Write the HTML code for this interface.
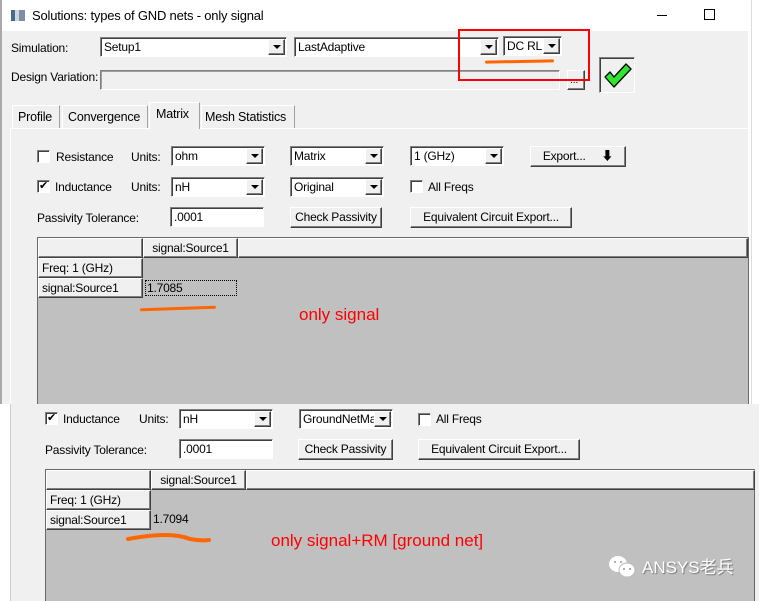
<!DOCTYPE html>
<html><head><meta charset="utf-8"><style>
*{margin:0;padding:0;box-sizing:border-box}
html,body{width:759px;height:601px;overflow:hidden}
body{position:relative;background:#fff;font-family:"Liberation Sans","Noto Sans CJK SC",sans-serif;font-size:12px;letter-spacing:-0.2px;color:#000}
.a{position:absolute}
.t{position:absolute;white-space:nowrap;line-height:14px}
.cb{position:absolute;height:20px;background:#fff;border:1px solid;border-color:#808080 #fff #fff #808080;box-shadow:inset 1px 1px 0 #404040;overflow:hidden}
.cb span{position:absolute;left:3px;top:2px;white-space:nowrap}
.cb i{position:absolute;right:1px;top:1px;width:17px;height:16px;background:#f0f0f0;border:1px solid;border-color:#fff #404040 #404040 #fff;box-shadow:inset -1px -1px 0 #808080}
.cb i:after{content:"";position:absolute;left:4px;top:5px;border-left:4px solid transparent;border-right:4px solid transparent;border-top:4px solid #000}
.btn{position:absolute;height:21px;background:#f0f0f0;border:1px solid;border-color:#fff #404040 #404040 #fff;box-shadow:inset -1px -1px 0 #808080;text-align:center;line-height:18px;white-space:nowrap}
.ck{position:absolute;width:13px;height:13px;background:#fff;border:1px solid;border-color:#808080 #fff #fff #808080;box-shadow:inset 1px 1px 0 #404040;font-size:11px;line-height:11px;text-align:center}
.hc{position:absolute;background:#f0f0f0;border:1px solid;border-color:#fff #404040 #404040 #fff;box-shadow:inset -1px -1px 0 #808080;white-space:nowrap;line-height:18px;padding-left:3px}
.grid{position:absolute;background:#c0c0c0;border:1px solid #696969}
.red{position:absolute;color:#f00;font-size:17px;letter-spacing:0;white-space:nowrap}
</style></head><body>
<div class="a" style="left:748px;top:0;width:11px;height:601px;background:#fff"></div>
<div class="a" style="left:751px;top:0;width:1px;height:404px;background:#ddd"></div>
<div class="a" style="left:0;top:0;width:748px;height:404px;background:#f0f0f0;border-left:2px solid #aaa"></div>
<div class="a" style="left:2px;top:0;width:746px;height:31px;background:#fff"></div>
<div class="a" style="left:11px;top:10px;width:14px;height:11px;background:linear-gradient(90deg,#4a6a8a 0 4px,#cfd6de 4px 8px,#7b8ea3 8px)"></div>
<div class="t" style="left:32px;top:9px;font-size:13px">Solutions: types of GND nets - only signal</div>
<div class="a" style="left:657px;top:15px;width:10px;height:1px;background:#000"></div>
<div class="a" style="left:704px;top:9px;width:11px;height:11px;border:1px solid #000"></div>

<div class="t" style="left:11px;top:41px">Simulation:</div>
<div class="cb" style="left:100px;top:37px;width:187px"><span>Setup1</span><i></i></div>
<div class="cb" style="left:294px;top:37px;width:205px"><span>LastAdaptive</span><i></i></div>
<div class="cb" style="left:503px;top:36px;width:59px;font-size:12px"><span>DC RL</span><i></i></div>
<div class="t" style="left:11px;top:70px">Design Variation:</div>
<div class="a" style="left:100px;top:70px;width:460px;height:20px;background:#f0f0f0;border:1px solid;border-color:#808080 #fff #fff #808080;box-shadow:inset 1px 1px 0 #a0a0a0"></div>
<div class="btn" style="left:567px;top:70px;width:18px;height:20px"></div>
<div class="t" style="left:570px;top:74px;font-size:10px;letter-spacing:0">...</div>
<div class="a" style="left:458px;top:29px;width:132px;height:52px;border:2px solid #f00"></div>
<div class="a" style="left:485px;top:60px;width:69px;height:3px;background:#f60;border-radius:2px;transform:rotate(-1deg)"></div>
<div class="a" style="left:599px;top:57px;width:36px;height:36px;background:#f0f0f0;border:1px solid;border-color:#808080 #fff #fff #808080;box-shadow:inset 1px 1px 0 #404040"></div>
<svg class="a" style="left:602px;top:60px" width="30" height="30" viewBox="0 0 30 30"><path d="M3 17 L8 12 L12 17 L24 4 L29 9 L12 27 Z" fill="#2ee62e" stroke="#000" stroke-width="1.3" stroke-linejoin="round"/></svg>

<div class="a" style="left:10px;top:128px;width:738px;height:276px;border-top:1px solid #fff;border-left:1px solid #fff;background:#f0f0f0"></div>
<div class="a" style="left:12px;top:105px;width:48px;height:23px;border:1px solid #fff;border-right-color:#a0a0a0;border-bottom:none;font-size:12.5px;padding:4px 0 0 5px">Profile</div>
<div class="a" style="left:62px;top:105px;width:86px;height:23px;border:1px solid #fff;border-right-color:#a0a0a0;border-bottom:none;font-size:12.5px;padding:4px 0 0 5px">Convergence</div>
<div class="a" style="left:149px;top:102px;width:51px;height:27px;border:1px solid #fff;border-right-color:#a0a0a0;border-bottom:none;background:#f0f0f0;font-size:12.5px;padding:4px 0 0 6px">Matrix</div>
<div class="a" style="left:201px;top:105px;width:94px;height:23px;border:1px solid #fff;border-right-color:#a0a0a0;border-bottom:none;font-size:12.5px;padding:4px 0 0 3px">Mesh Statistics</div>

<div class="ck" style="left:37px;top:150px"></div>
<div class="t" style="left:56px;top:150px">Resistance</div>
<div class="t" style="left:131px;top:150px">Units:</div>
<div class="cb" style="left:171px;top:146px;width:94px"><span>ohm</span><i></i></div>
<div class="cb" style="left:290px;top:146px;width:94px"><span>Matrix</span><i></i></div>
<div class="cb" style="left:410px;top:146px;width:94px"><span>1 (GHz)</span><i></i></div>
<div class="btn" style="left:530px;top:146px;width:96px">Export... &nbsp;&nbsp;&nbsp;&nbsp;<b>&#x2B07;</b></div>

<div class="ck" style="left:37px;top:180px">✔</div>
<div class="t" style="left:55px;top:180px">Inductance</div>
<div class="t" style="left:131px;top:180px">Units:</div>
<div class="cb" style="left:171px;top:177px;width:94px"><span>nH</span><i></i></div>
<div class="cb" style="left:290px;top:177px;width:94px"><span>Original</span><i></i></div>
<div class="ck" style="left:410px;top:180px"></div>
<div class="t" style="left:428px;top:180px">All Freqs</div>

<div class="t" style="left:37px;top:211px">Passivity Tolerance:</div>
<div class="cb" style="left:170px;top:207px;width:94px"><span>.0001</span></div>
<div class="btn" style="left:290px;top:207px;width:92px">Check Passivity</div>
<div class="btn" style="left:410px;top:207px;width:162px">Equivalent Circuit Export...</div>

<div class="grid" style="left:37px;top:237px;width:712px;height:170px"></div>
<div class="hc" style="left:38px;top:238px;width:105px;height:20px"></div>
<div class="hc" style="left:143px;top:238px;width:95px;height:20px;text-align:center;padding:0">signal:Source1</div>
<div class="hc" style="left:238px;top:238px;width:510px;height:20px"></div>
<div class="hc" style="left:38px;top:258px;width:105px;height:20px">Freq: 1 (GHz)</div>
<div class="hc" style="left:38px;top:278px;width:105px;height:20px">signal:Source1</div>
<div class="a" style="left:145px;top:280px;width:92px;height:16px;border:1px dotted #000;padding-left:1px;line-height:14px">1.7085</div>
<div class="a" style="left:140px;top:307px;width:76px;height:3px;background:#f60;border-radius:2px;transform:rotate(-2deg)"></div>
<div class="red" style="left:299px;top:305px">only signal</div>

<div class="a" style="left:0;top:404px;width:10px;height:197px;background:#fff"></div>
<div class="a" style="left:10px;top:404px;width:749px;height:197px;background:#f0f0f0;border-left:1px solid #ccc"></div>
<div class="ck" style="left:45px;top:412px">✔</div>
<div class="t" style="left:63px;top:412px">Inductance</div>
<div class="t" style="left:139px;top:412px">Units:</div>
<div class="cb" style="left:179px;top:409px;width:94px"><span>nH</span><i></i></div>
<div class="cb" style="left:299px;top:409px;width:94px"><span>GroundNetMatrix</span><i></i></div>
<div class="ck" style="left:418px;top:413px"></div>
<div class="t" style="left:436px;top:412px">All Freqs</div>
<div class="t" style="left:45px;top:443px">Passivity Tolerance:</div>
<div class="cb" style="left:179px;top:439px;width:94px"><span>.0001</span></div>
<div class="btn" style="left:298px;top:439px;width:95px">Check Passivity</div>
<div class="btn" style="left:418px;top:439px;width:162px">Equivalent Circuit Export...</div>

<div class="grid" style="left:45px;top:469px;width:710px;height:135px"></div>
<div class="hc" style="left:46px;top:470px;width:105px;height:20px"></div>
<div class="hc" style="left:151px;top:470px;width:95px;height:20px;text-align:center;padding:0">signal:Source1</div>
<div class="hc" style="left:246px;top:470px;width:509px;height:20px"></div>
<div class="hc" style="left:46px;top:490px;width:105px;height:20px">Freq: 1 (GHz)</div>
<div class="hc" style="left:46px;top:510px;width:105px;height:20px">signal:Source1</div>
<div class="t" style="left:153px;top:512px">1.7094</div>
<svg class="a" style="left:125px;top:530px" width="90" height="16"><path d="M3 9 Q25 5 40 5 Q55 5 65 9 Q75 11 84 10" stroke="#f60" stroke-width="4" fill="none" stroke-linecap="round"/></svg>
<div class="red" style="left:271px;top:531px">only signal+RM [ground net]</div>

<svg class="a" style="left:608px;top:555px" width="30" height="24" viewBox="0 0 30 24"><ellipse cx="10" cy="9" rx="9" ry="8" fill="#fff"/><ellipse cx="19" cy="15" rx="8" ry="7" fill="#fff" stroke="#bbb" stroke-width="1"/><circle cx="7" cy="7" r="1" fill="#999"/><circle cx="13" cy="7" r="1" fill="#999"/><circle cx="16" cy="14" r="1" fill="#999"/><circle cx="22" cy="14" r="1" fill="#999"/></svg>
<div class="t" style="left:642px;top:558px;font-size:17px;line-height:20px;letter-spacing:0;color:#fff;text-shadow:1px 1px 1px #777">ANSYS老兵</div>
</body></html>
